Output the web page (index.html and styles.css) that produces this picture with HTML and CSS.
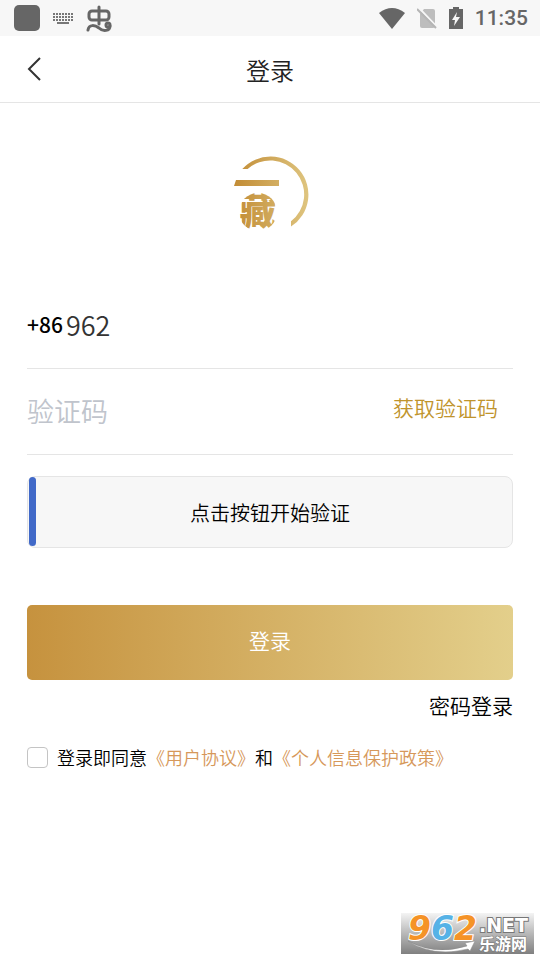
FILE: index.html
```html
<!DOCTYPE html>
<html lang="zh-CN">
<head>
    <meta charset="UTF-8">
    <meta name="viewport" content="width=device-width, initial-scale=1.0">
    <title>登录</title>
    <link rel="stylesheet" href="styles.css">
</head>
<body>
    <div class="status-bar">
        <div class="status-left">
            <span class="status-app"></span>
            <svg class="icon-keyboard" width="22" height="12" viewBox="0 0 22 12" fill="none" stroke="#777" stroke-width="2">
                <path d="M1 2h20M1 5h20M1 8h20" stroke-dasharray="2 1"/>
                <path d="M5 11h12"/>
            </svg>
            <svg class="icon-bug" width="26" height="28" viewBox="0 0 26 28" fill="none" stroke="#666" stroke-width="3" stroke-linecap="round">
                <rect x="3" y="7" width="20" height="9" rx="3"/>
                <path d="M13 3v17"/>
                <path d="M2 26c1-6 7-5 11-2c4 4 11 3 11-2"/>
                <circle cx="22" cy="21" r="2"/>
            </svg>
        </div>
        <div class="status-right">
            <svg width="26" height="21" viewBox="0 0 26 21" fill="#666">
                <path d="M0 5Q13-5 26 5L13 21z"/>
            </svg>
            <svg width="20" height="21" viewBox="0 0 20 21">
                <path d="M7 1h9q2 0 2 2v15q0 2-2 2H5q-2 0-2-2V6z" fill="#bdbdbd"/>
                <path d="M2 0l18 19" stroke="#f7f7f7" stroke-width="2"/>
                <path d="M0 1l19 19" stroke="#b5b5b5" stroke-width="2"/>
            </svg>
            <svg width="14" height="22" viewBox="0 0 14 22">
                <path d="M4 0h6v2h4v20H0V2h4z" fill="#666"/>
                <path d="M8 5L3 13h3l-1 6 6-9H7z" fill="#f7f7f7"/>
            </svg>
            <span class="time">11:35</span>
        </div>
    </div>

    <header class="header">
        <button class="back" type="button" aria-label="返回">
            <svg width="14" height="24" viewBox="0 0 14 24" fill="none" stroke="#333" stroke-width="2">
                <path d="M13 1L2 12l11 11"/>
            </svg>
        </button>
        <h1 class="title">登录</h1>
    </header>

    <main class="content">
        <svg class="logo" width="80" height="76" viewBox="-4 0 80 76">
            <defs>
                <linearGradient id="gold" gradientUnits="userSpaceOnUse" x1="0" y1="0" x2="76" y2="0">
                    <stop offset="0" stop-color="#c28c35"/>
                    <stop offset="1" stop-color="#dfc681"/>
                </linearGradient>
                <clipPath id="seal"><circle cx="24" cy="56" r="19"/></clipPath>
            </defs>
            <path d="M8.3 13A38 38 0 1 1 57 70.5V65.3A34 34 0 1 0 13.6 13z" fill="url(#gold)"/>
            <path d="M2 24h43v6H0z" fill="url(#gold)"/>
            <text class="logo-text" x="24" y="69" text-anchor="middle" fill="url(#gold)" clip-path="url(#seal)">藏</text>
        </svg>

        <form class="login-form">
            <div class="field">
                <label class="area-code" for="phone">+86</label>
                <input class="input" id="phone" type="tel" value="962">
            </div>
            <div class="field">
                <input class="input" id="code" type="text" placeholder="验证码" aria-label="验证码">
                <button class="get-code" type="button">获取验证码</button>
            </div>
            <button class="verify" type="button">点击按钮开始验证</button>
            <button class="submit" type="submit">登录</button>
            <a class="password-login" href="#">密码登录</a>
            <div class="agreement">
                <input class="checkbox" id="agree" type="checkbox">
                <label for="agree">登录即同意<a href="#">《用户协议》</a>和<a href="#">《个人信息保护政策》</a></label>
            </div>
        </form>
    </main>

    <svg class="watermark" width="133" height="41" viewBox="0 0 133 41">
        <defs>
            <linearGradient id="shade" x1="0" y1="0" x2="0" y2="1">
                <stop offset="0" stop-color="#f4f4f4"/>
                <stop offset="0.5" stop-color="#b8b8b8"/>
                <stop offset="1" stop-color="#808080"/>
            </linearGradient>
        </defs>
        <rect width="133" height="41" fill="url(#shade)"/>
        <path d="M7 28Q34 43 66 33L64 30L74 28L69 38L67 36Q33 45 7 28z" fill="#fff" stroke="#888" stroke-width="0.5"/>
        <text class="mark-number" x="7" y="27"><tspan fill="#f59327">9</tspan><tspan fill="#56b2e6">6</tspan><tspan fill="#f59327">2</tspan></text>
        <text class="mark-net" x="78" y="19">.NET</text>
        <text class="mark-name" x="78" y="37">乐游网</text>
    </svg>
</body>
</html>
```
FILE: styles.css
```css
* {
    box-sizing: border-box;
}

body {
    margin: 0;
    min-height: 100vh;
    position: relative;
    background-color: #fff;
    color: #000;
    font-family: "Noto Sans CJK SC", sans-serif;
    font-weight: 350;
}

button, input {
    font-family: inherit;
    font-weight: inherit;
    padding: 0;
    border: none;
    background: none;
}

a {
    text-decoration: none;
}

svg {
    display: block;
}

/* Status bar */
.status-bar {
    display: flex;
    justify-content: space-between;
    align-items: center;
    height: 36px;
    padding: 0 12px 0 14px;
    background-color: #f7f7f7;
}

.status-left, .status-right {
    display: flex;
    align-items: center;
    gap: 12px;
}

.status-app {
    width: 26px;
    height: 26px;
    border-radius: 5px;
    background-color: #666;
}

.time {
    font-family: Roboto, sans-serif;
    font-size: 21px;
    font-weight: 500;
    color: #666;
}

/* Header */
.header {
    display: grid;
    grid-template-columns: 60px 1fr 60px;
    align-items: center;
    height: 67px;
    border-bottom: 1px solid #e5e5e5;
}

.back {
    display: flex;
    align-items: center;
    height: 60px;
    padding-left: 27px;
}

.title {
    margin: 0;
    text-align: center;
    font-size: 24px;
    font-weight: inherit;
    color: #222;
}

.content {
    padding: 53px 27px 0;
}

.logo {
    margin: 0 auto;
}

.logo-text {
    font-size: 37px;
    font-weight: 900;
}

/* Form */
.login-form {
    display: flex;
    flex-direction: column;
    margin-top: 51px;
}

.field {
    display: flex;
    align-items: center;
    height: 86px;
    padding-bottom: 3px;
    border-bottom: 1px solid #e5e5e5;
}

.area-code {
    margin-right: 3px;
    font-size: 21px;
    font-weight: 500;
    color: #000;
}

.input {
    flex: 1;
    min-width: 0;
    font-size: 27px;
    color: #333;
    outline: none;
}

.input::placeholder {
    color: #c0c4cc;
    opacity: 1;
}

.get-code {
    padding: 0 15px 6px 0;
    font-size: 21px;
    color: #c0942c;
}

.verify {
    height: 72px;
    margin-top: 21px;
    border: 1px solid #e5e5e5;
    border-radius: 8px;
    background-color: #f7f7f7;
    font-size: 20px;
    color: #000;
    position: relative;
}

.verify::before {
    content: "";
    position: absolute;
    top: 0;
    bottom: 1px;
    left: 1px;
    width: 7px;
    border-radius: 4px;
    background-color: #4169c8;
}

.submit {
    height: 75px;
    margin-top: 57px;
    padding-bottom: 6px;
    border-radius: 5px;
    background: linear-gradient(to right, #c6923e, #e3cf8b);
    font-size: 21px;
    color: #fff;
}

.password-login {
    align-self: flex-end;
    margin-top: 10px;
    font-size: 21px;
    line-height: 30px;
    color: #000;
}

.agreement {
    display: flex;
    align-items: center;
    gap: 9px;
    margin-top: 22px;
    font-size: 18px;
    line-height: 30px;
}

.agreement a {
    color: #d6985a;
}

.checkbox {
    appearance: none;
    flex: none;
    width: 21px;
    height: 21px;
    margin: 0;
    border: 1px solid #c4c4c4;
    border-radius: 4px;
    background-color: #fff;
}

.checkbox:checked {
    background-color: #c6923e;
}

/* Site mark over the bottom right corner */
.watermark {
    position: absolute;
    right: 6px;
    bottom: 6px;
}

.mark-number {
    font-family: "DejaVu Sans", sans-serif;
    font-size: 33px;
    font-weight: 700;
    font-style: italic;
    stroke: #fff;
    stroke-width: 2px;
    paint-order: stroke;
}

.mark-net {
    font-family: "DejaVu Sans", sans-serif;
    font-size: 19px;
    font-weight: 700;
    fill: #fff;
    stroke: #777;
    stroke-width: 2px;
    paint-order: stroke;
}

.mark-name {
    font-size: 16px;
    font-weight: 700;
    fill: #fff;
    stroke: #777;
    stroke-width: 1px;
    paint-order: stroke;
}
```
